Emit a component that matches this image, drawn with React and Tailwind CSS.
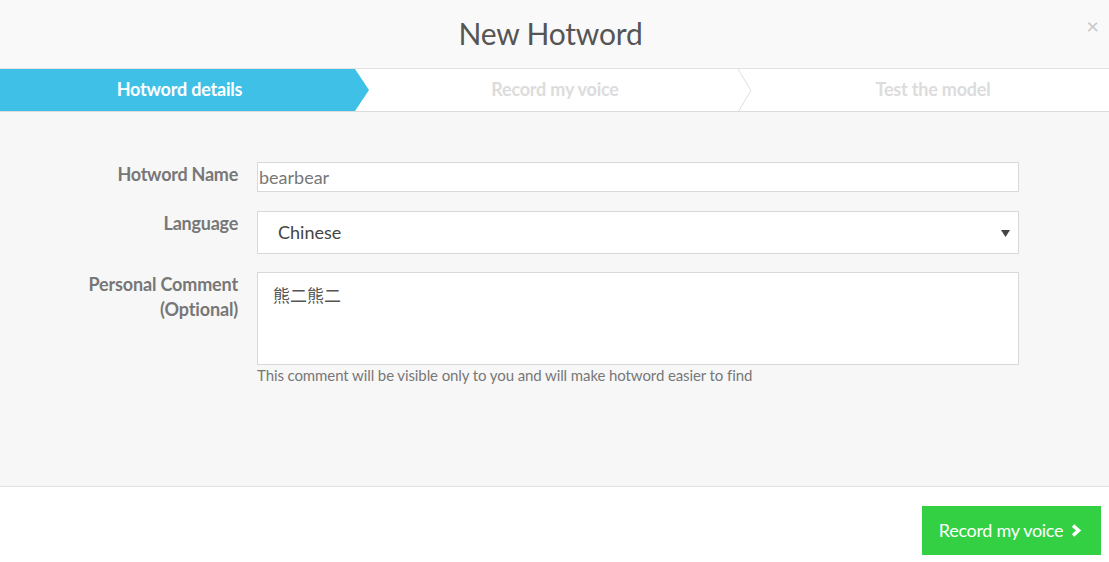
import React from "react";

export default function App() {
  const font = { fontFamily: "Lato, 'Noto Sans CJK SC', sans-serif" };
  return (
    <div className="w-[1109px] h-[562px] flex flex-col bg-white overflow-hidden" style={font}>
      {/* header */}
      <div className="relative h-[69px] bg-[#f9f9f9] border-b border-[#e2e2e2] flex items-center justify-center pr-[8px]">
        <h1 className="text-[30px] text-[#555] leading-none mt-[-3px] tracking-[-0.2px]">New Hotword</h1>
        <span className="absolute right-[10px] top-[15px] text-[22px] leading-none text-[#c8c8c8]">×</span>
      </div>
      {/* steps */}
      <div className="relative h-[43px] flex bg-white border-b border-[#dcdcdc] text-[18px] font-bold tracking-[-0.2px]">
        <div className="w-[369px] bg-[#3fc1e7] text-white flex items-center justify-center pr-[10px] pb-[2px] [clip-path:polygon(0_0,355px_0,369px_50%,355px_100%,0_100%)]">
          Hotword details
        </div>
        <div className="relative w-[370px] flex items-center justify-center text-[#dcdcdc] pl-[2px] pb-[2px]">
          Record my voice
          <svg className="absolute right-[-14px] top-0" width="16" height="43" viewBox="0 0 16 43">
            <polyline points="1,0 14,21.5 1,43" fill="none" stroke="#dedede" strokeWidth="1" />
          </svg>
        </div>
        <div className="flex-1 flex items-center justify-center text-[#dcdcdc] pl-[18px] pb-[2px]">
          Test the model
        </div>
      </div>
      {/* body */}
      <div className="flex-1 bg-[#f7f7f7] border-b border-[#e2e2e2] pt-[50px]">
        <div className="flex flex-col">
          <div className="flex items-start">
            <div className="w-[238px] text-right text-[18px] font-bold text-[#777] leading-[24px] tracking-[-0.25px]">Hotword Name</div>
            <div className="ml-[19px] w-[762px] h-[30px] border border-[#d9d9d9] bg-white flex items-center pl-[1px] text-[18px] text-[#777]">
              bearbear
            </div>
          </div>
          <div className="flex items-start mt-[19px]">
            <div className="w-[238px] text-right text-[18px] font-bold text-[#777] leading-[24px] tracking-[-0.25px]">Language</div>
            <div className="ml-[19px] w-[762px] h-[43px] border border-[#d9d9d9] bg-white flex items-center justify-between pl-[20px] pr-[8px] text-[18px] text-[#444]">
              <span>Chinese</span>
              <svg width="9" height="8" viewBox="0 0 9 8"><polygon points="0,1 9,1 4.5,8" fill="#444" /></svg>
            </div>
          </div>
          <div className="flex items-start mt-[18px]">
            <div className="w-[238px] text-right text-[18px] font-bold text-[#777] leading-[25px] tracking-[-0.15px]">
              Personal Comment<br />(Optional)
            </div>
            <div className="ml-[19px] w-[762px] flex flex-col">
              <div className="h-[93px] border border-[#d9d9d9] bg-white pl-[15px] pt-[10px] text-[17px] text-[#555] leading-[24px]" style={{ fontFamily: "'Noto Sans CJK SC', sans-serif" }}>
                熊二熊二
              </div>
              <div className="text-[15px] text-[#777] leading-[20px] tracking-[-0.1px]">
                This comment will be visible only to you and will make hotword easier to find
              </div>
            </div>
          </div>
        </div>
      </div>
      {/* footer */}
      <div className="h-[75px] bg-white flex justify-end items-start pt-[19px] pr-[8px]">
        <button className="w-[179px] h-[49px] bg-[#33d044] text-white text-[18px] flex items-center justify-center gap-[7px] tracking-[-0.3px] pr-[2px]">
          Record my voice
          <svg width="12" height="15" viewBox="0 0 12 15">
            <polyline points="3,2.5 8.5,7.5 3,12.5" fill="none" stroke="#fff" strokeWidth="3.6" strokeLinecap="butt" strokeLinejoin="miter" />
          </svg>
        </button>
      </div>
    </div>
  );
}
